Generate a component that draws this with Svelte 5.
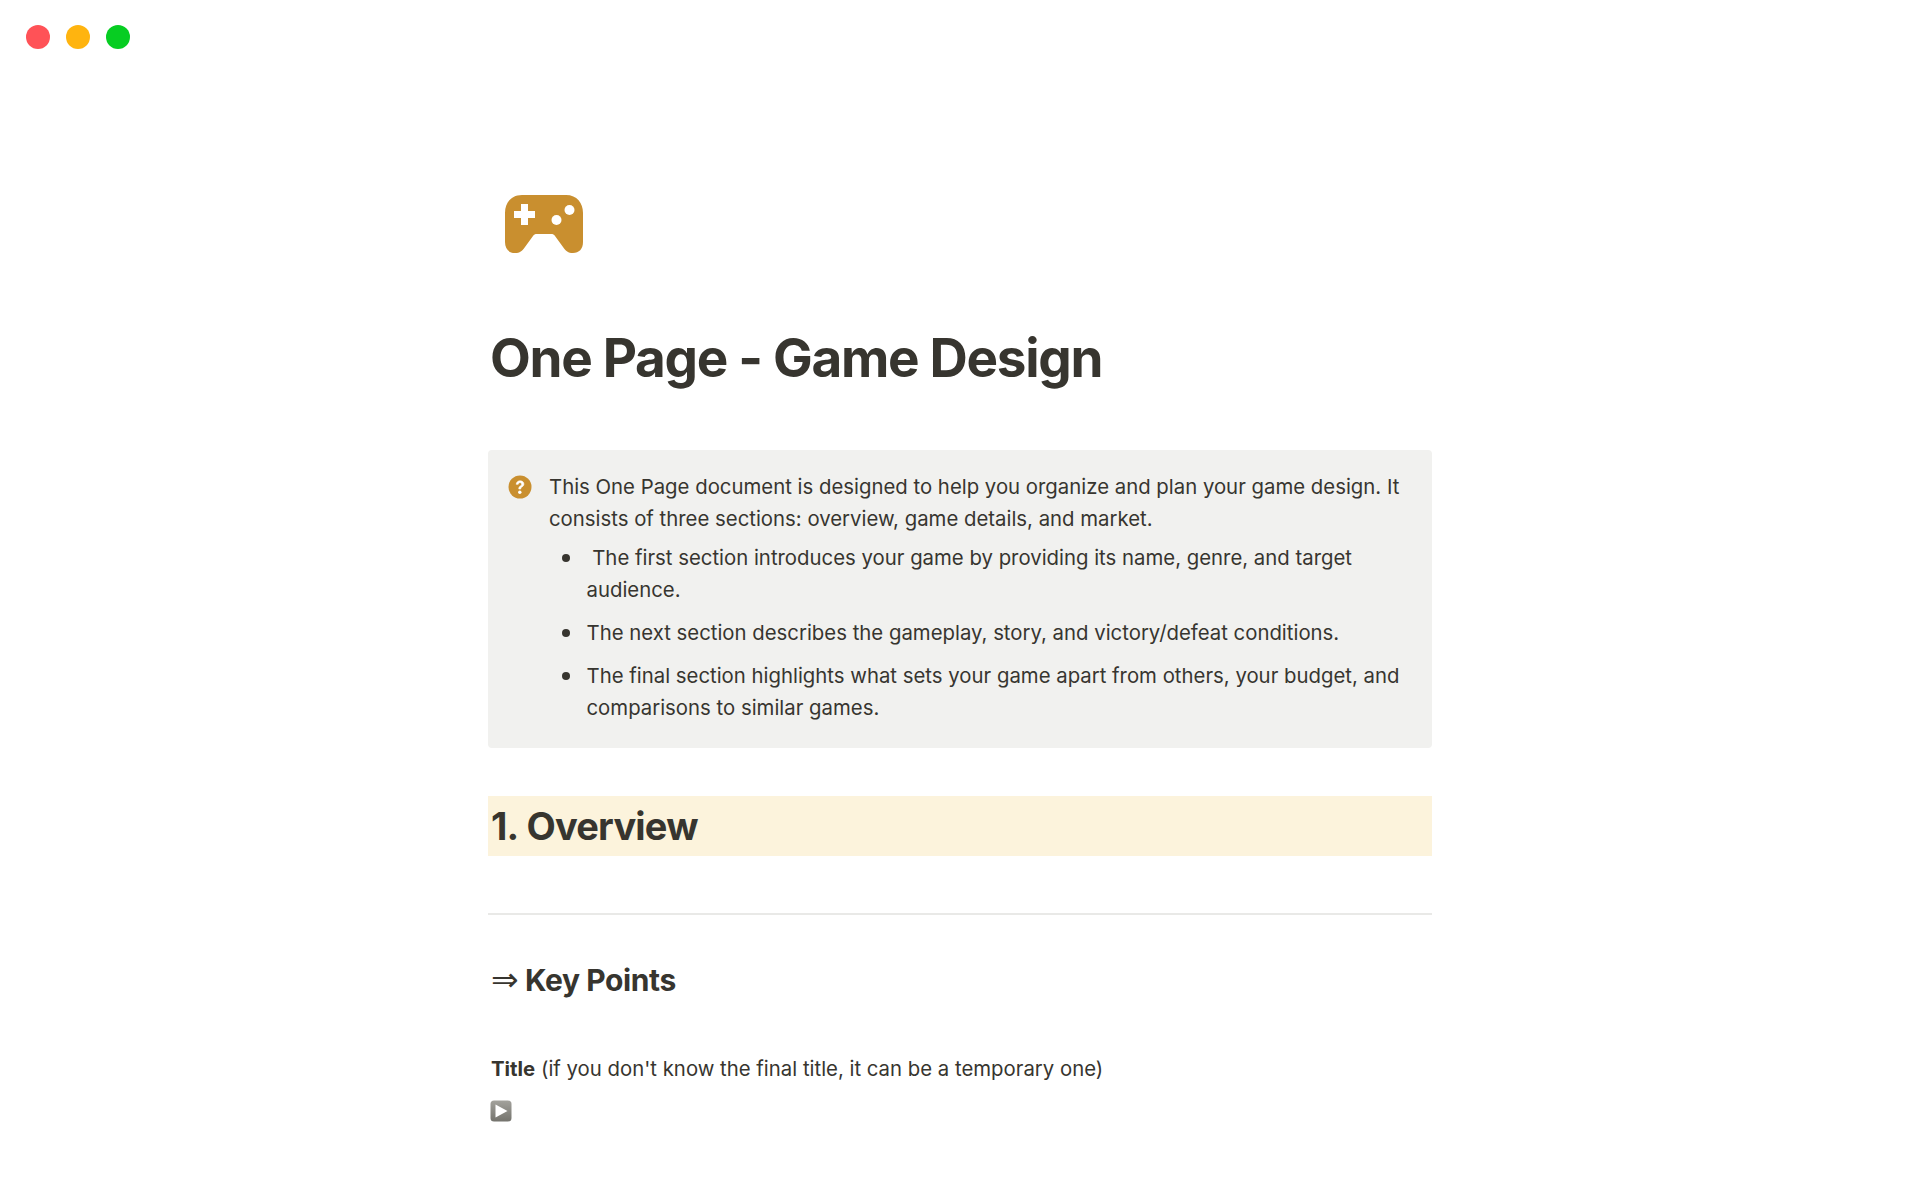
<script lang="ts">
  const bullets = [
    '\u00a0The first section introduces your game by providing its name, genre, and target audience.',
    'The next section describes the gameplay, story, and victory/defeat conditions.',
    'The final section highlights what sets your game apart from others, your budget, and comparisons to similar games.'
  ];
</script>

<div class="window">
  <div class="traffic">
    <span class="dot red"></span>
    <span class="dot yellow"></span>
    <span class="dot green"></span>
  </div>

  <main class="page">
    <div class="page-icon">
      <svg width="80" height="60" viewBox="0 0 80 60">
        <path fill="#c98f2f" d="M18 0H62C73 0 79 8 79 18V47C79 54 75 58 69 58C64 58 62 56 59 52L51 41C50 39.500 49 39 47 39H33C31 39 30 39.500 29 41L21 52C18 56 16 58 11 58C5 58 1 54 1 47V18C1 8 7 0 18 0Z"/>
        <path fill="#fff" d="M10 16H17V9H24V16H31V23H24V30H17V23H10Z"/>
        <circle cx="52.500" cy="25" r="5" fill="#fff"/>
        <circle cx="65.500" cy="15" r="5" fill="#fff"/>
      </svg>
    </div>

    <h1>One Page - Game Design</h1>

    <section class="callout">
      <svg class="callout-icon" width="24" height="24" viewBox="0 0 24 24">
        <circle cx="12" cy="12" r="11.500" fill="#c98f2f"/>
        <path d="M8.200 9.300C8.400 7 10 5.800 12.100 5.800C14.300 5.800 15.900 7.100 15.900 9C15.900 10.500 15 11.300 13.900 12C13 12.600 12.800 13 12.800 14H10.800C10.700 12.500 11.200 11.700 12.400 10.900C13.300 10.300 13.700 9.900 13.700 9.200C13.700 8.300 13 7.700 12 7.700C11 7.700 10.300 8.400 10.200 9.300Z" fill="#fff" stroke="#fff" stroke-width="0.600"/>
        <circle cx="11.800" cy="17.200" r="1.700" fill="#fff"/>
      </svg>
      <div class="callout-body">
        <p>This One Page document is designed to help you organize and plan your game design. It consists of three sections: overview, game details, and market.</p>
        <ul>
          {#each bullets as bullet}
            <li>{bullet}</li>
          {/each}
        </ul>
      </div>
    </section>

    <h2 class="overview">1. Overview</h2>

    <hr />

    <h3><span class="arrow">⇒</span> Key Points</h3>

    <p class="field"><strong>Title</strong> (if you don't know the final title, it can be a temporary one)</p>

    <div class="toggle">
      <svg width="22" height="22" viewBox="0 0 22 22">
        <defs>
          <linearGradient id="btn" x1="0" y1="0" x2="0" y2="1">
            <stop offset="0" stop-color="#a3a29c"/>
            <stop offset="1" stop-color="#74736d"/>
          </linearGradient>
        </defs>
        <rect x="0.500" y="0.500" width="21" height="21" rx="3.500" fill="url(#btn)"/>
        <path d="M5.500 4.500L17.500 11L5.500 17.500Z" fill="#fff"/>
      </svg>
    </div>
  </main>
</div>

<style>
  :global(body) {
    margin: 0;
    background: #fff;
  }

  .window {
    height: 1200px;
    overflow: hidden;
    font-family: Inter, "Liberation Sans", sans-serif;
    color: #37352f;
  }

  .traffic {
    display: flex;
    gap: 16px;
    padding: 25px 0 0 26px;
  }

  .dot {
    width: 24px;
    height: 24px;
    border-radius: 50%;
  }

  .red { background: #ff5257; }
  .yellow { background: #ffb40f; }
  .green { background: #07cd22; }

  .page {
    width: 944px;
    margin: 0 auto;
    padding-top: 146px;
  }

  .page-icon {
    padding-left: 16px;
    height: 60px;
  }

  .page-icon svg {
    display: block;
  }

  h1 {
    margin: 73px 0 0 2px;
    font-size: 53px;
    line-height: 60px;
    font-weight: 700;
    letter-spacing: -1.300px;
  }

  .callout {
    display: flex;
    gap: 17px;
    margin-top: 62px;
    padding: 21px 20px 23.500px;
    background: #f1f1ef;
    border-radius: 4px;
    font-size: 20.350px;
    line-height: 32px;
  }

  .callout-icon {
    flex-shrink: 0;
    margin-top: 4px;
  }

  .callout-body {
    flex: 1;
  }

  .callout-body p {
    margin: 0;
  }

  ul {
    margin: 7px 0 0;
    padding: 0 0 0 37.500px;
    list-style: none;
  }

  li {
    position: relative;
    margin-bottom: 11px;
  }

  li::before {
    content: "";
    position: absolute;
    left: -25px;
    top: 12px;
    width: 8px;
    height: 8px;
    border-radius: 50%;
    background: #37352f;
  }

  li:last-child {
    margin-bottom: 0;
  }

  .overview {
    margin: 48px 0 0;
    padding: 0 3px;
    height: 60px;
    background: #fcf3dc;
    font-size: 38px;
    line-height: 60px;
    font-weight: 700;
    letter-spacing: -0.800px;
    word-spacing: 1px;
  }

  hr {
    margin: 57px 0 0;
    border: 0;
    border-top: 2px solid #e9e9e7;
  }

  h3 {
    margin: 46px 0 0 3px;
    font-size: 30px;
    line-height: 38px;
    font-weight: 700;
    letter-spacing: -0.400px;
  }

  .arrow {
    font-family: "DejaVu Sans", sans-serif;
    font-size: 33px;
    line-height: 0;
    font-weight: 400;
  }

  .field {
    margin: 54px 0 0 3px;
    font-size: 20.350px;
    line-height: 32px;
  }

  .toggle {
    margin: 15px 0 0 2px;
  }

  .toggle svg {
    display: block;
  }
</style>
